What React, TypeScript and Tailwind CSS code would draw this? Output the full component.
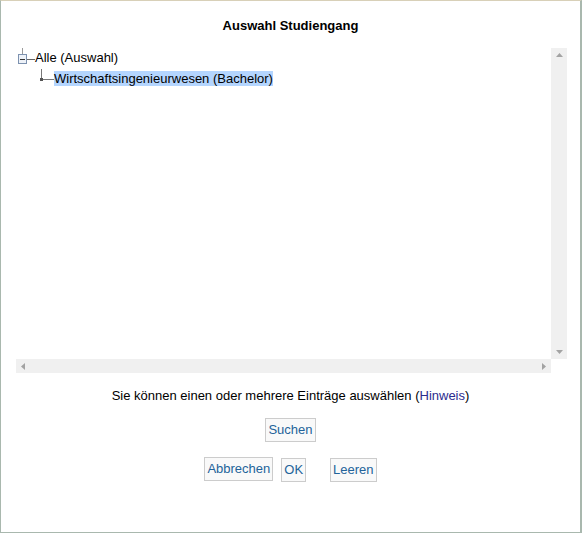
import React from "react";

function Btn({ children }: { children: React.ReactNode }) {
  return (
    <button className="h-6 border border-[#cccccc] bg-[#f9f9f9] px-[2px] text-[13px] leading-[22px] text-[#23639a]">
      {children}
    </button>
  );
}

export default function App() {
  return (
    <div
      className="w-[582px] h-[533px] bg-white border-l border-r-2 border-b border-l-[#a9b8ae] border-r-[#a9b8ae] border-b-[#a9b8ae] border-t border-t-[#d8d0b8] flex flex-col items-center text-black"
      style={{ fontFamily: '"Liberation Sans", Arial, sans-serif' }}
    >
      <h1 className="pt-[17px] text-[13px] font-bold leading-4">Auswahl Studiengang</h1>

      {/* tree panel */}
      <div className="mt-[14px] self-start ml-[15px] grid grid-cols-[535px_16px] grid-rows-[311px_14px]">
        <div className="pl-[2px] text-[13px]">
          <div className="flex items-center h-5">
            <svg width="17" height="20" viewBox="0 0 17 20">
              <line x1="4.5" y1="0" x2="4.5" y2="6" stroke="#9a9a9a" />
              <rect x="0.5" y="6.5" width="8" height="9" fill="#eef2f8" stroke="#7d92b0" />
              <line x1="2" y1="11.5" x2="7" y2="11.5" stroke="#333" />
              <line x1="9" y1="11.5" x2="17" y2="11.5" stroke="#666" />
            </svg>
            <span className="leading-4">Alle (Auswahl)</span>
          </div>
          <div className="flex items-center h-5 pl-[17px]">
            <svg width="19" height="20" viewBox="0 0 19 20">
              <line x1="6.5" y1="1" x2="6.5" y2="11" stroke="#777" />
              <line x1="6" y1="11.5" x2="19" y2="11.5" stroke="#777" />
              <rect x="5" y="10" width="3" height="3" fill="#555" />
            </svg>
            <span className="bg-[#b4d5fe] leading-[15px]">Wirtschaftsingenieurwesen (Bachelor)</span>
          </div>
        </div>
        <div className="bg-[#f0f0f0] flex flex-col items-center justify-between py-[5px]">
          <svg width="7" height="4" viewBox="0 0 7 4">
            <polygon points="3.5,0 7,4 0,4" fill="#a3a3a3" />
          </svg>
          <svg width="7" height="4" viewBox="0 0 7 4">
            <polygon points="0,0 7,0 3.5,4" fill="#a3a3a3" />
          </svg>
        </div>
        <div className="bg-[#f0f0f0] flex items-center justify-between px-[5px]">
          <svg width="4" height="7" viewBox="0 0 4 7">
            <polygon points="4,0 4,7 0,3.5" fill="#a3a3a3" />
          </svg>
          <svg width="4" height="7" viewBox="0 0 4 7">
            <polygon points="0,0 0,7 4,3.5" fill="#a3a3a3" />
          </svg>
        </div>
        <div className="bg-white" />
      </div>

      <p className="mt-[15px] text-[13px] leading-4">
        Sie können einen oder mehrere Einträge auswählen (
        <a className="text-[#2c2c8e]">Hinweis</a>)
      </p>

      <div className="mt-[13px]">
        <Btn>Suchen</Btn>
      </div>

      <div className="mt-[15px] flex">
        <Btn>Abbrechen</Btn>
        <div className="ml-2">
          <Btn>OK</Btn>
        </div>
        <div className="ml-6">
          <Btn>Leeren</Btn>
        </div>
      </div>
    </div>
  );
}
